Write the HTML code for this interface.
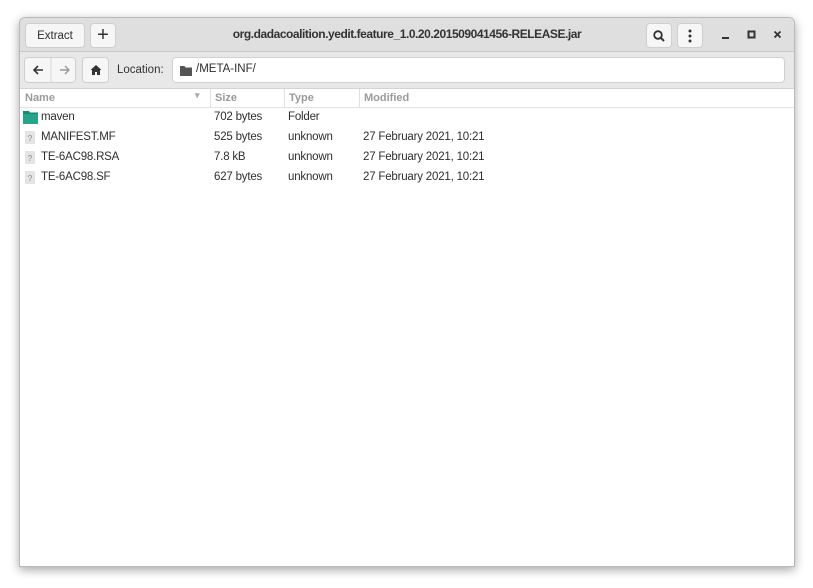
<!DOCTYPE html>
<html><head><style>
*{box-sizing:border-box;margin:0;padding:0}
body{width:813px;height:588px;background:#fff;font-family:"Liberation Sans",sans-serif;font-size:11.5px;color:#2e2e2e;position:relative;overflow:hidden}
.win{position:absolute;left:19px;top:17px;width:776px;height:550px;background:#fff;border:1px solid #b9b9b9;border-radius:6px 6px 0 0;box-shadow:0 3px 10px rgba(0,0,0,.35);overflow:hidden}
.hb{position:absolute;left:0;top:0;width:100%;height:34px;background:#dfdfdf;border-bottom:1px solid #c8c8c8}
.btn{position:absolute;background:#f6f6f6;border:1px solid #cfcfcf;border-radius:4px;height:25px;display:flex;align-items:center;justify-content:center}
.tb{position:absolute;left:0;top:34px;width:100%;height:37px;background:#e8e8e8;border-bottom:1px solid #d3d3d3}
.title{position:absolute;left:0;right:0;top:9px;text-align:center;font-weight:bold;font-size:12px;color:#333;letter-spacing:-0.45px}
.colh{position:absolute;top:71px;left:0;width:100%;height:19px;border-bottom:1px solid #e2e2e2;color:#9a9a9a;font-weight:bold;font-size:11px}
.colh span{position:absolute;top:3px}
.sep{position:absolute;top:0;width:1px;height:19px;background:#e0e0e0}
.row{position:absolute;left:0;width:100%;height:20px}
.row span{position:absolute;top:3px;letter-spacing:-0.2px}
.fi{position:absolute;left:5px;top:3px;width:10px;height:13px;background:#e4e4e4;color:#888;font-size:8px;text-align:center;line-height:15px}
</style></head><body>
<div class="win">
 <div class="hb">
  <div class="btn" style="left:5px;top:5px;width:60px">Extract</div>
  <div class="btn" style="left:70px;top:5px;width:26px;font-size:20px">+</div>
  <div class="title">org.dadacoalition.yedit.feature_1.0.20.201509041456-RELEASE.jar</div>
  <div class="btn" style="left:626px;top:5px;width:26px"><svg width="14" height="14" viewBox="0 0 14 14"><circle cx="6" cy="6" r="3.8" fill="none" stroke="#333" stroke-width="1.8"/><path d="M8.8 8.8L12 12" stroke="#333" stroke-width="2"/></svg></div>
  <div class="btn" style="left:657px;top:5px;width:26px"><svg width="4" height="14"><circle cx="2" cy="2" r="1.5" fill="#333"/><circle cx="2" cy="7" r="1.5" fill="#333"/><circle cx="2" cy="12" r="1.5" fill="#333"/></svg></div>
  <svg style="position:absolute;left:701px;top:12px" width="10" height="10"><rect x="1" y="7" width="7" height="2" fill="#333"/></svg>
  <svg style="position:absolute;left:727px;top:12px" width="10" height="10"><rect x="1.5" y="1.5" width="6" height="6" fill="none" stroke="#333" stroke-width="2"/></svg>
  <svg style="position:absolute;left:753px;top:12px" width="10" height="10"><path d="M1.5 1.5L7.5 7.5M7.5 1.5L1.5 7.5" stroke="#333" stroke-width="1.8"/></svg>
 </div>
 <div class="tb">
  <div class="btn" style="left:4px;top:5px;width:52px;height:26px">
   <svg width="52" height="24"><path d="M18 12h-8M13 8l-4 4 4 4" fill="none" stroke="#333" stroke-width="1.6"/><line x1="26" y1="0" x2="26" y2="24" stroke="#d5d5d5"/><path d="M35 12h8M40 8l4 4-4 4" fill="none" stroke="#999" stroke-width="1.4"/></svg>
  </div>
  <div class="btn" style="left:62px;top:5px;width:27px;height:26px"><svg width="12" height="12"><path d="M6 1L0.5 6H2v5h3V8h2v3h3V6h1.5z" fill="#333"/></svg></div>
  <span style="position:absolute;left:97px;top:12px;font-size:11.5px;color:#333">Location:</span>
  <div style="position:absolute;left:152px;top:5px;width:613px;height:26px;background:#fff;border:1px solid #d0d0d0;border-radius:4px">
   <svg style="position:absolute;left:7px;top:7px" width="12" height="11"><path d="M0 1h4.5l1 1.5H12V11H0z" fill="#555"/></svg>
   <span style="position:absolute;left:23px;top:5px">/META-INF/</span>
  </div>
 </div>
 <div class="colh">
  <span style="left:5px">Name</span><span style="left:175px;top:1px;font-size:9px;color:#aaa">▾</span>
  <div class="sep" style="left:190px"></div><span style="left:195px">Size</span>
  <div class="sep" style="left:264px"></div><span style="left:269px">Type</span>
  <div class="sep" style="left:339px"></div><span style="left:344px">Modified</span>
 </div>
 <div class="row" style="top:90px"><svg style="position:absolute;left:3px;top:3px" width="15" height="13"><path d="M0 0h6l1 1.5h8V13H0z" fill="#1a8a74"/><rect x="0" y="3" width="15" height="10" fill="#27a589"/></svg><span style="left:21px">maven</span><span style="left:194px">702 bytes</span><span style="left:268px">Folder</span></div>
 <div class="row" style="top:110px"><div class="fi">?</div><span style="left:21px">MANIFEST.MF</span><span style="left:194px">525 bytes</span><span style="left:268px">unknown</span><span style="left:343px">27 February 2021, 10:21</span></div>
 <div class="row" style="top:130px"><div class="fi">?</div><span style="left:21px">TE-6AC98.RSA</span><span style="left:194px">7.8 kB</span><span style="left:268px">unknown</span><span style="left:343px">27 February 2021, 10:21</span></div>
 <div class="row" style="top:150px"><div class="fi">?</div><span style="left:21px">TE-6AC98.SF</span><span style="left:194px">627 bytes</span><span style="left:268px">unknown</span><span style="left:343px">27 February 2021, 10:21</span></div>
</div>
</body></html>
